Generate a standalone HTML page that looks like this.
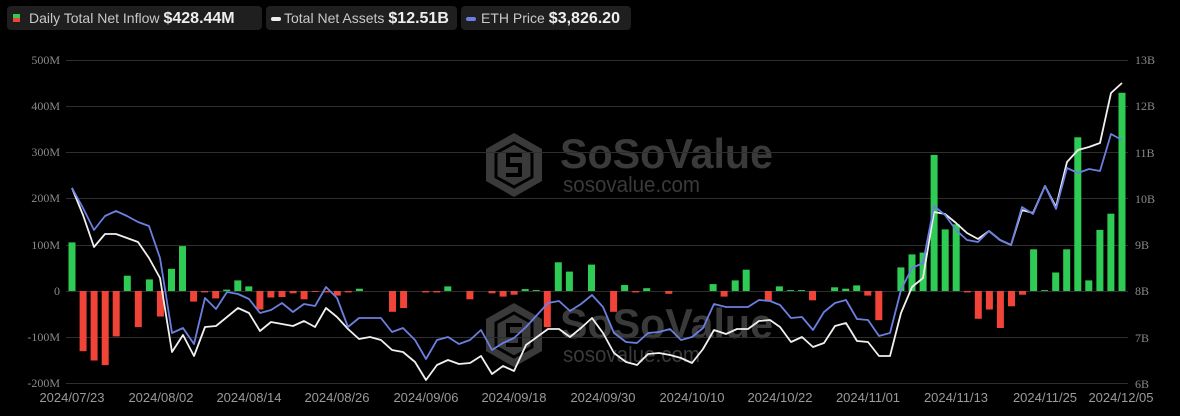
<!DOCTYPE html>
<html><head><meta charset="utf-8"><style>
html,body{margin:0;padding:0;background:#000;width:1180px;height:416px;overflow:hidden;font-family:"Liberation Sans",sans-serif}
.lg{position:absolute;top:6px;height:24px;background:#1f1f1f;border-radius:4px;color:#c8c8c8;font-size:14px;line-height:24px;white-space:nowrap;padding-left:22px;box-sizing:border-box}
.lg b{color:#eee;font-size:16px;margin-left:4px}
</style></head><body>
<div class="lg" style="left:7px;width:255px"><span style="position:absolute;left:6px;top:8px;width:7px;height:4px;background:#2fcc55"></span><span style="position:absolute;left:6px;top:12px;width:7px;height:4px;background:#f04438"></span>Daily Total Net Inflow<b>$428.44M</b></div>
<div class="lg" style="left:266px;width:191px;padding-left:18px"><span style="position:absolute;left:5px;top:11px;width:10px;height:4px;border-radius:2px;background:#eee"></span>Total Net Assets<b>$12.51B</b></div>
<div class="lg" style="left:461px;width:170px;padding-left:20px"><span style="position:absolute;left:5px;top:11px;width:10px;height:4px;border-radius:2px;background:#6b7fe0"></span>ETH Price<b>$3,826.20</b></div>
<svg id="s" width="1180" height="416" style="position:absolute;left:0;top:0" xmlns="http://www.w3.org/2000/svg">
<defs>
<g id="logo">
<path d="M28 0 L56 16 L56 48 L28 64 L0 48 L0 16Z" fill="#3a3a3a"/>
<path d="M28 10 L46 20 L46 44 L28 54 L10 44 L10 20Z" fill="none" stroke="#000" stroke-width="3"/>
<path d="M36 22 L22 22 L22 32 L34 32 L34 42 L20 42" fill="none" stroke="#000" stroke-width="4"/>
</g>
</defs>
<g>
<use href="#logo" x="486" y="133"/>
<text x="560" y="168" font-size="42" font-weight="bold" fill="#3a3a3a" textLength="213" lengthAdjust="spacingAndGlyphs">SoSoValue</text>
<text x="563" y="192" font-size="22" fill="#3a3a3a" textLength="137" lengthAdjust="spacingAndGlyphs">sosovalue.com</text>
<use href="#logo" x="486" y="303"/>
<text x="560" y="338" font-size="42" font-weight="bold" fill="#3a3a3a" textLength="213" lengthAdjust="spacingAndGlyphs">SoSoValue</text>
<text x="563" y="362" font-size="22" fill="#3a3a3a" textLength="137" lengthAdjust="spacingAndGlyphs">sosovalue.com</text>
</g>
<g stroke="#2e2e2e" stroke-width="1">
<line x1="66" x2="1128" y1="60.5" y2="60.5"/><line x1="66" x2="1128" y1="106.5" y2="106.5"/><line x1="66" x2="1128" y1="152.5" y2="152.5"/><line x1="66" x2="1128" y1="198.5" y2="198.5"/><line x1="66" x2="1128" y1="245.5" y2="245.5"/><line x1="66" x2="1128" y1="291.5" y2="291.5"/><line x1="66" x2="1128" y1="337.5" y2="337.5"/><line x1="66" x2="1128" y1="383.5" y2="383.5"/>
</g>
<g font-family="Liberation Serif,serif" font-size="12" fill="#8a8a8a" text-anchor="end">
<text x="60" y="64">500M</text><text x="60" y="110">400M</text><text x="60" y="156">300M</text><text x="60" y="202">200M</text><text x="60" y="249">100M</text><text x="60" y="295">0</text><text x="60" y="341">-100M</text><text x="60" y="387">-200M</text>
</g>
<g font-family="Liberation Serif,serif" font-size="12" fill="#8a8a8a">
<text x="1135" y="64">13B</text><text x="1135" y="110">12B</text><text x="1135" y="157">11B</text><text x="1135" y="203">10B</text><text x="1135" y="249">9B</text><text x="1135" y="295">8B</text><text x="1135" y="342">7B</text><text x="1135" y="388">6B</text>
</g>
<g font-size="13" fill="#9a9a9a" text-anchor="middle">
<text x="72" y="402">2024/07/23</text><text x="161" y="402">2024/08/02</text><text x="249" y="402">2024/08/14</text><text x="337" y="402">2024/08/26</text><text x="426" y="402">2024/09/06</text><text x="514" y="402">2024/09/18</text><text x="603" y="402">2024/09/30</text><text x="692" y="402">2024/10/10</text><text x="780" y="402">2024/10/22</text><text x="868" y="402">2024/11/01</text><text x="956" y="402">2024/11/13</text><text x="1045" y="402">2024/11/25</text><text x="1121" y="402">2024/12/05</text>
</g>
<g id="bars"></g>
<polyline id="wl" fill="none" stroke="#f0f0f0" stroke-width="1.8" stroke-linejoin="round"/>
<polyline id="bl" fill="none" stroke="#6b7fe0" stroke-width="1.8" stroke-linejoin="round"/>
</svg>
<script>
var v=[105,-130,-150,-160,-98,33,-78,25,-55,48,97,-23,-3,-16,3,23,10,-40,-14,-13,-5,-18,-2,-3,-10,-3,5,-1,0,-45,-37,0,-3,-3,10,0,-18,1,-5,-12,-8,4,2,-78,62,42,0,57,0,-45,13,-3,6,0,-6,0,1,0,15,-12,23,46,1,-23,10,2,2,-20,-1,8,5,12,-10,-63,0,51,79,83,294,133,144,-3,-60,-40,-80,-33,-8,90,2,40,90,332,23,132,167,428];
var n=v.length,step=1050/(n-1),h='';
for(var i=0;i<n;i++){var x=72+i*step,p=v[i]*0.463;if(Math.abs(p)<0.5)continue;
var y=p>0?291-p:291,hh=Math.abs(p);h+='<rect x="'+(x-3.5).toFixed(1)+'" y="'+y.toFixed(1)+'" width="7" height="'+hh.toFixed(1)+'" fill="'+(p>0?'#2fcc55':'#f04438')+'"/>';}
document.getElementById('bars').innerHTML=h;
document.getElementById('wl').setAttribute('points',"72,188 83,215 94,247 105,234 116,234 127,238 138,242 149,258 160,278 172,352 183,335 194,356 205,327 216,326 227,317 238,308 249,313 260,331 271,322 282,324 293,326 304,321 315,327 326,308 337,317 348,329 359,339 370,337 381,340 392,350 403,352 415,362 426,380 437,365 448,360 459,364 470,363 481,356 492,374 503,366 514,371 526,345 537,337 548,329 559,329 570,337 581,328 592,318 603,333 614,353 626,362 637,365 648,354 659,353 670,355 681,358 692,363 703,349 714,330 726,334 737,329 748,329 759,321 770,320 780,327 791,342 802,337 813,347 824,343 835,326 846,323 857,341 868,342 879,356 890,356 901,313 912,287 923,278 934,212 945,214 956,223 967,233 978,239 989,231 1000,240 1011,245 1022,210 1033,213 1045,186 1056,207 1067,162 1078,150 1089,147 1100,143 1111,93 1122,83");
document.getElementById('bl').setAttribute('points',"72,188 83,208 94,230 105,216 116,211 127,216 138,222 149,226 160,258 172,333 183,328 194,344 205,298 216,309 227,292 238,294 249,299 260,313 271,310 282,303 293,312 304,304 315,306 326,287 337,298 348,327 359,318 370,318 381,318 392,332 403,328 415,340 426,359 437,340 448,337 459,344 470,340 481,330 492,350 503,343 514,338 526,327 537,315 548,303 559,301 570,311 581,304 592,295 603,307 614,333 626,342 637,343 648,333 659,332 670,329 681,340 692,337 703,328 714,304 726,307 737,307 748,307 759,300 770,301 780,305 791,318 802,317 813,330 824,312 835,303 846,300 857,319 868,320 879,336 890,333 901,290 912,268 923,263 934,206 945,215 956,230 967,240 978,242 989,231 1000,240 1011,245 1022,207 1033,214 1045,186 1056,209 1067,168 1078,173 1089,169 1100,171 1111,134 1122,140");
</script>
</body></html>
